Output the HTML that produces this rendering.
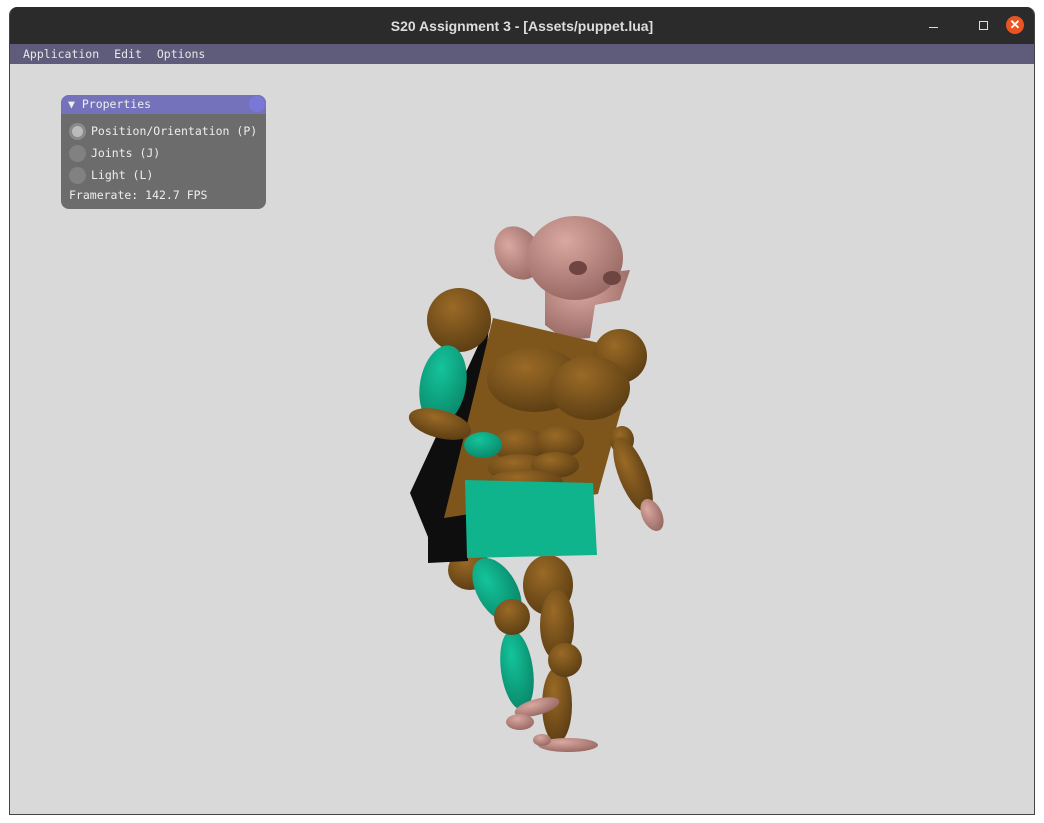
<!DOCTYPE html>
<html><head><style>
body{margin:0;width:1044px;height:823px;background:#fff;position:relative;overflow:hidden;font-family:"DejaVu Sans Mono","Liberation Mono",monospace;}
.win{position:absolute;left:9px;top:7px;width:1026px;height:808px;background:#d9d9d9;border-radius:8px 8px 0 0;overflow:hidden;border:1px solid #444;box-sizing:border-box;border-top:none}
.title{height:37px;background:#2b2b2b;color:#ddd;font:bold 14px "Liberation Sans",sans-serif;text-align:center;line-height:38px}
.menu{height:20px;background:#5e5c7a;color:#e8e8e8;font-size:11.5px;line-height:20px;padding-left:13px;word-spacing:0}
.menu span{margin-right:15px}
.panel{position:absolute;left:51px;top:88px;width:205px;height:114px;background:#6c6c6c;border-radius:8px;overflow:hidden;color:#eee;font-size:11.5px}
.ph{height:19px;background:#7472bb;line-height:19px;padding-left:7px}
.row{height:22px;line-height:22px;padding-left:30px;position:relative}
.row i{position:absolute;left:8px;top:3px;width:17px;height:17px;border-radius:50%;background:#818181}
</style></head><body>
<div class="win">
<div class="title">S20 Assignment 3 - [Assets/puppet.lua]</div>
<div class="menu"><span>Application</span><span>Edit</span><span>Options</span></div>
<div class="panel"><div class="ph">▼ Properties<span style="position:absolute;right:1px;top:1px;width:16px;height:16px;border-radius:50%;background:#7a78d6"></span></div>
<div style="height:6px"></div>
<div class="row"><i style="background:#8a8a8a"><b style="position:absolute;left:3px;top:3px;width:11px;height:11px;border-radius:50%;background:#bbb"></b></i>Position/Orientation (P)</div>
<div class="row"><i></i>Joints (J)</div>
<div class="row"><i></i>Light (L)</div>
<div style="padding-left:8px;line-height:18px">Framerate: 142.7 FPS</div>
</div>
<div style="position:absolute;right:96px;top:14px;width:9px;height:1px;background:#ddd;top:20px"></div>
<div style="position:absolute;right:46px;top:14px;width:7px;height:7px;border:1px solid #ddd"></div>
<div style="position:absolute;right:10px;top:9px;width:18px;height:18px;border-radius:50%;background:#e95420;color:#fff;font:bold 13px sans-serif;text-align:center;line-height:18px">✕</div>
</div>
<svg style="position:absolute;left:0;top:0" width="1044" height="823">
<defs>
<radialGradient id="b" cx="40%" cy="30%" r="70%"><stop offset="0" stop-color="#9a6a26"/><stop offset="1" stop-color="#5e3f14"/></radialGradient>
<radialGradient id="t" cx="40%" cy="30%" r="70%"><stop offset="0" stop-color="#14c49b"/><stop offset="1" stop-color="#0a8a6c"/></radialGradient>
<radialGradient id="p" cx="40%" cy="30%" r="70%"><stop offset="0" stop-color="#d9a8a0"/><stop offset="1" stop-color="#9a6a65"/></radialGradient>
</defs>
<ellipse cx="548" cy="585" rx="25" ry="30" fill="url(#b)"/>
<ellipse cx="557" cy="625" rx="17" ry="35" fill="url(#b)"/>
<ellipse cx="557" cy="705" rx="15" ry="38" fill="url(#b)"/>
<circle cx="565" cy="660" r="17" fill="url(#b)"/>
<ellipse cx="470" cy="570" rx="22" ry="20" fill="url(#b)"/>
<ellipse cx="497" cy="590" rx="20" ry="35" transform="rotate(-30 497 590)" fill="url(#t)"/>
<ellipse cx="517" cy="670" rx="16" ry="40" transform="rotate(-8 517 670)" fill="url(#t)"/>
<circle cx="512" cy="617" r="18" fill="url(#b)"/>
<ellipse cx="537" cy="707" rx="23" ry="8" transform="rotate(-15 537 707)" fill="url(#p)"/>
<ellipse cx="520" cy="722" rx="14" ry="8" fill="url(#p)"/>
<ellipse cx="568" cy="745" rx="30" ry="7" fill="url(#p)"/>
<ellipse cx="542" cy="740" rx="9" ry="6" fill="url(#p)"/>
<ellipse cx="518" cy="253" rx="22" ry="28" transform="rotate(-30 518 253)" fill="url(#p)"/>
<polygon points="545,280 630,270 620,300 595,305 590,338 565,340 545,325" fill="url(#p)"/>
<ellipse cx="575" cy="258" rx="48" ry="42" fill="url(#p)"/>
<ellipse cx="578" cy="268" rx="9" ry="7" fill="#6e4541"/><ellipse cx="612" cy="278" rx="9" ry="7" fill="#6e4541"/>
<polygon points="490,320 410,493 428,537 428,563 468,561 468,500" fill="#0e0e0e"/>
<polygon points="493,318 637,352 598,494 444,518" fill="#7e561c"/>
<circle cx="620" cy="356" r="27" fill="url(#b)"/>
<ellipse cx="535" cy="380" rx="48" ry="32" fill="url(#b)"/>
<ellipse cx="590" cy="388" rx="40" ry="32" fill="url(#b)"/>
<ellipse cx="520" cy="445" rx="28" ry="17" fill="url(#b)"/>
<ellipse cx="560" cy="442" rx="24" ry="16" fill="url(#b)"/>
<ellipse cx="520" cy="468" rx="32" ry="14" fill="url(#b)"/>
<ellipse cx="555" cy="465" rx="24" ry="13" fill="url(#b)"/>
<ellipse cx="525" cy="482" rx="38" ry="12" fill="url(#b)"/>
<circle cx="459" cy="320" r="32" fill="url(#b)"/>
<ellipse cx="443" cy="385" rx="23" ry="40" transform="rotate(10 443 385)" fill="url(#t)"/>
<ellipse cx="440" cy="424" rx="32" ry="14" transform="rotate(15 440 424)" fill="url(#b)"/>
<ellipse cx="483" cy="445" rx="19" ry="13" fill="url(#t)"/>
<ellipse cx="622" cy="440" rx="12" ry="14" fill="url(#b)"/>
<ellipse cx="633" cy="475" rx="14" ry="40" transform="rotate(-22 633 475)" fill="url(#b)"/>
<ellipse cx="652" cy="515" rx="10" ry="17" transform="rotate(-25 652 515)" fill="url(#p)"/>
<polygon points="465,480 593,483 597,555 467,558" fill="#0fb38c"/>
</svg>
</body></html>
